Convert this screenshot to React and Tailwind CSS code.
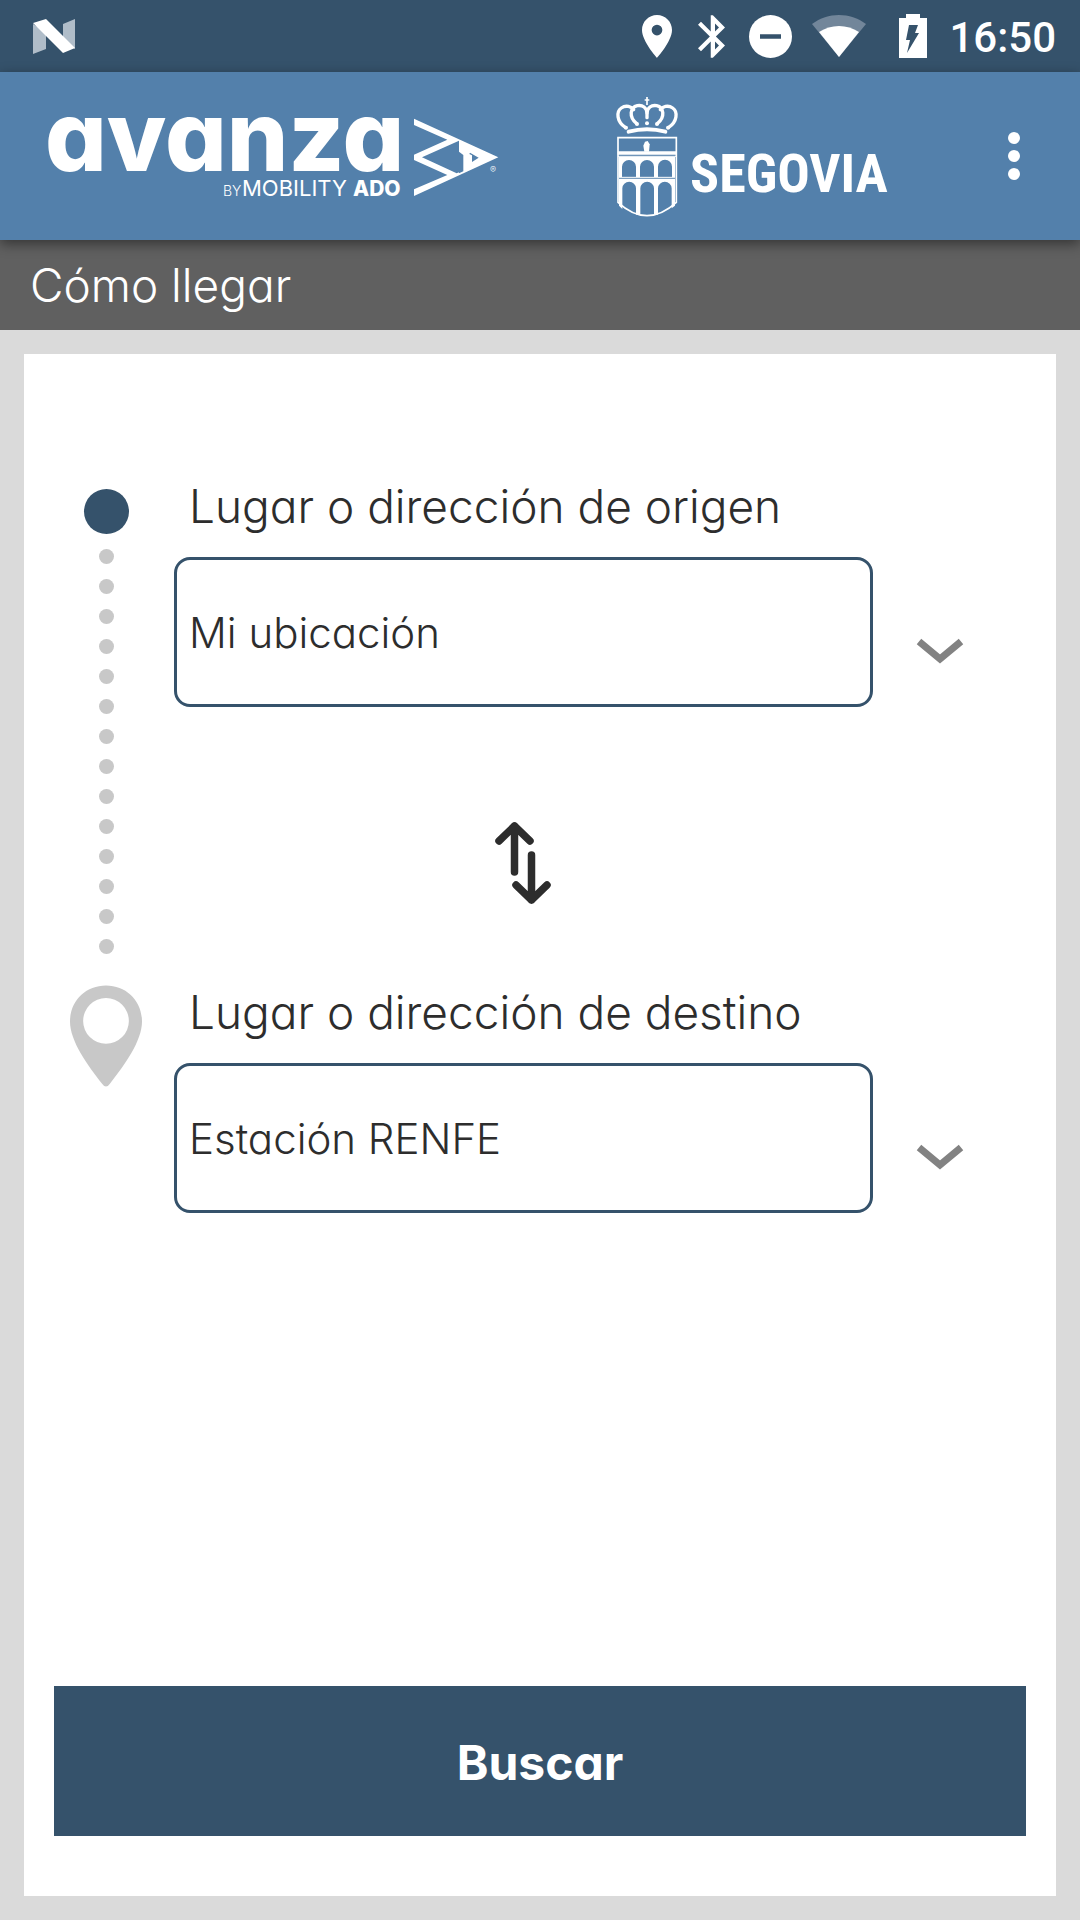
import { useState } from "react";

const DOTS = Array.from({ length: 14 }, (_, i) => i);

function StatusBar() {
  return (
    <div className="flex h-[72px] items-center bg-[#35526b] pl-[33px] pr-6 text-white">
      <svg className="h-9 w-[42px]" viewBox="0 0 42 36" aria-label="Android N">
        <path d="M0 6L13 14V31L0 36zM30 6L42 1V31L30 24z" fill="#b0bdc9" />
        <path d="M0 5L13 1L42 30L30 35z" fill="#fff" />
      </svg>
      <div className="ml-auto flex items-center">
        <svg className="h-[43px] w-[30px]" viewBox="5 2 14 20" fill="currentColor" aria-label="Ubicación">
          <path d="M12 2C8.13 2 5 5.13 5 9c0 5.25 7 13 7 13s7-7.75 7-13c0-3.87-3.13-7-7-7zm0 9.5a2.5 2.5 0 1 1 0-5 2.5 2.5 0 0 1 0 5z" />
        </svg>
        <svg className="ml-[26px] h-[43px] w-[27px]" viewBox="5 2 12.71 20" fill="currentColor" aria-label="Bluetooth">
          <path d="M17.71 7.71L12 2h-1v7.59L6.41 5 5 6.41 10.59 12 5 17.59 6.41 19 11 14.41V22h1l5.71-5.71-4.3-4.29 4.3-4.29zM13 5.83l1.88 1.88L13 9.59V5.83zm1.88 10.46L13 18.17v-3.76l1.88 1.88z" />
        </svg>
        <svg className="ml-6 h-[43px] w-[43px]" viewBox="0 0 43 43" aria-label="No molestar">
          <circle cx="21.5" cy="21.5" r="21.5" fill="#fff" />
          <path d="M11 21.5H32" stroke="#35526b" strokeWidth="4.5" />
        </svg>
        <svg className="ml-5 h-[43px] w-[54px]" viewBox="0 0 54 43" aria-label="Wifi">
          <path d="M0 9C16 -3 38 -3 54 9L27 42z" fill="#72869a" />
          <path d="M7 17C19 9 35 9 47 17L27 42z" fill="#fff" />
        </svg>
        <svg className="ml-[33px] h-11 w-7" viewBox="0 0 28 44" aria-label="Batería cargando">
          <path d="M0 4H7V0H21V4H28V44H0z" fill="#fff" />
          <path d="M10 11H19L16 19H20L8 39L11 26H7z" fill="#35526b" />
        </svg>
        <span className="ml-[22px] pt-[3px] font-['Roboto',sans-serif] text-[42px] font-medium leading-none">16:50</span>
      </div>
    </div>
  );
}

function AvanzaLogo() {
  return (
    <svg className="h-[110px] w-[460px] shrink-0 overflow-visible" viewBox="40 101 460 110" fill="#fff" aria-label="avanza by Mobility ADO">
      <g className="font-['Inter',sans-serif] [font-feature-settings:'cv11']">
        <text x="45" y="171" fontSize="97" fontWeight="800">avanza</text>
        <text x="223" y="196" fontSize="14" fontWeight="300">BY</text>
        <text x="242" y="196" fontSize="22" fontWeight="400">MOBILITY</text>
        <text x="353" y="196" fontSize="21" fontWeight="800">ADO</text>
        <text x="490" y="173" fontSize="9">®</text>
      </g>
      <g transform="translate(260 90) scale(.33333)">
        <path
          fillRule="evenodd"
          d="M462 86L715 202L462 318V298L562 255L462 210V194L562 149L462 105zM486 202L590 250L597 247V152zM597 185L610 195V244L597 250zM630 188L656 203L636 216V196L628 192z"
        />
      </g>
    </svg>
  );
}

function SegoviaCrest() {
  return (
    <svg className="h-[123px] w-[65px] shrink-0" viewBox="45 28 195 369" fill="none" stroke="#fff" aria-label="Escudo de Segovia">
      <path d="M141 34V58M134 43H148" strokeWidth="5" />
      <g strokeWidth="10" strokeLinecap="round">
        <path d="M76 125C50 108 48 78 64 67C78 57 95 63 101 72" />
        <path d="M206 125C232 108 234 78 218 67C204 57 187 63 181 72" />
        <path d="M109 113C86 93 90 65 112 60C128 57 140 66 141 82" />
        <path d="M173 113C196 93 192 65 170 60C154 57 142 66 141 82V96" />
        <path d="M86 138Q141 123 196 138" strokeWidth="12" />
      </g>
      <g fill="#fff" stroke="none">
        <circle cx="141" cy="113" r="6" />
        <circle cx="111" cy="115" r="6" />
        <circle cx="171" cy="115" r="6" />
        <circle cx="78" cy="126" r="6" />
        <circle cx="204" cy="126" r="6" />
        <path d="M133 198L130 180L135 168L143 166L149 176L147 198z" />
        <path fillRule="evenodd" d="M57 214H225V274H216V243a20 20 0 0 0-42 0V274H162V243a21 20 0 0 0-42 0V274H108V243a21 20 0 0 0-42 0V274H57z" />
        <path d="M57 279H225V360L215 368V308a20 19 0 0 0-41 0V387H162V308a20 19 0 0 0-41 0V387H108V308a20 19 0 0 0-41 0V370L57 360z" />
        <path d="M53 197H229V207H53z" />
      </g>
      <path d="M54 156H229V350Q185 390 141 390Q97 390 54 350z" strokeWidth="5" />
      <path d="M54 212H229M57 275H225" strokeWidth="3" />
    </svg>
  );
}

function Header() {
  return (
    <header className="relative z-10 flex h-[168px] items-center bg-[#5380ab] pl-10 pr-9 shadow-[0_4px_12px_rgba(0,0,0,0.45)]">
      <AvanzaLogo />
      <div className="ml-[115px] flex items-center gap-[10px]">
        <SegoviaCrest />
        <span className="pt-9 font-['Liberation_Sans_Narrow','Roboto_Condensed','Roboto',sans-serif] text-[54px] font-bold leading-none text-white">
          SEGOVIA
        </span>
      </div>
      <button type="button" aria-label="Más opciones" className="ml-auto flex h-24 w-[60px] flex-col items-center justify-center gap-[6px]">
        <span className="size-3 rounded-full bg-white" />
        <span className="size-3 rounded-full bg-white" />
        <span className="size-3 rounded-full bg-white" />
      </button>
    </header>
  );
}

function PlaceField({ id, label, value, onChange }) {
  return (
    <div className="grid grid-cols-[1fr_134px] items-end">
      <label htmlFor={id} className="col-span-2 mb-[19px] pl-[15px] text-[46px] leading-[64px]">
        {label}
      </label>
      <input
        id={id}
        type="text"
        value={value}
        onChange={(e) => onChange(e.target.value)}
        className="h-[150px] w-full min-w-0 rounded-2xl border-[3px] border-[#35526b] bg-white px-3 text-[42px] font-light outline-none"
      />
      <button type="button" aria-label={`Opciones: ${label}`} className="flex h-28 items-center justify-center">
        <svg className="h-[26px] w-12" viewBox="0 0 48 26" fill="none" stroke="#828282" strokeWidth="7">
          <path d="M3 3.5L24 21L45 3.5" />
        </svg>
      </button>
    </div>
  );
}

export default function App() {
  const [origin, setOrigin] = useState("Mi ubicación");
  const [destination, setDestination] = useState("Estación RENFE");

  const swap = () => {
    setOrigin(destination);
    setDestination(origin);
  };

  return (
    <div className="flex min-h-screen flex-col bg-[#dadada] font-['Inter',sans-serif] font-light text-[#2d2d2d] [font-feature-settings:'cv11']">
      <StatusBar />
      <Header />
      <h1 className="bg-[#606060] pl-[30px] text-[46px] font-light leading-[90px] text-white">Cómo llegar</h1>
      <main className="flex flex-1 flex-col p-6">
        <form className="flex flex-1 flex-col bg-white pb-[60px] pt-[120px]" onSubmit={(e) => e.preventDefault()}>
          <div className="flex gap-8 pl-[46px] pr-[49px]">
            <div className="flex w-[72px] flex-col items-center gap-[15px] pt-[15px]" aria-hidden="true">
              <span className="size-[45px] rounded-full bg-[#35526b]" />
              {DOTS.map((i) => (
                <span key={i} className="size-[15px] rounded-full bg-[#c8c8c8]" />
              ))}
              <svg className="mt-[15px] h-[105px] w-[72px]" viewBox="0 0 74 105">
                <path
                  fill="#c8c8c8"
                  fillRule="evenodd"
                  d="M37 0C16 0 0 16 0 37C0 57 18 82 33 101Q37 107 41 101C56 82 74 57 74 37C74 16 58 0 37 0zM37 13a23.5 23.5 0 1 1 0 47a23.5 23.5 0 0 1 0-47z"
                />
              </svg>
            </div>
            <div className="min-w-0 flex-1">
              <PlaceField id="origin" label="Lugar o dirección de origen" value={origin} onChange={setOrigin} />
              <div className="mr-[136px] flex h-[273px] justify-center pt-[38px]">
                <button type="button" aria-label="Intercambiar origen y destino" onClick={swap} className="flex w-28 items-center justify-center">
                  <svg className="h-[82px] w-14" viewBox="0 0 56 82" fill="none" stroke="#2d2d2d" strokeWidth="7.5" strokeLinecap="round" strokeLinejoin="round">
                    <path d="M19.5 4V50M4 19L19.5 4L35 19M36.5 33V78M21 63L36.5 78L52 63" />
                  </svg>
                </button>
              </div>
              <PlaceField id="destination" label="Lugar o dirección de destino" value={destination} onChange={setDestination} />
            </div>
          </div>
          <button type="submit" className="mx-[30px] mt-auto h-[150px] bg-[#35526b] pt-1 text-[48px] font-bold text-white">
            Buscar
          </button>
        </form>
      </main>
    </div>
  );
}
